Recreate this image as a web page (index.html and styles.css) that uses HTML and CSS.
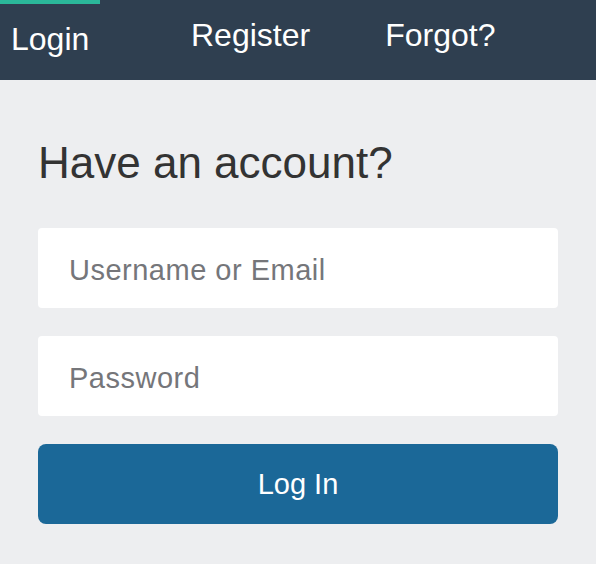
FILE: index.html
```html
<!DOCTYPE html>
<html lang="en">
<head>
<meta charset="utf-8">
<title>Login</title>
<link rel="stylesheet" href="styles.css">
</head>
<body>
<header class="topbar">
  <nav class="tabs">
    <a class="tab tab-login active">Login</a>
    <a class="tab tab-register">Register</a>
    <a class="tab tab-forgot">Forgot?</a>
  </nav>
</header>
<main class="panel">
  <h1 class="title">Have an account?</h1>
  <form class="form">
    <input class="field" type="text" placeholder="Username or Email">
    <input class="field" type="password" placeholder="Password">
    <button class="submit" type="button">Log In</button>
  </form>
</main>
</body>
</html>
```

FILE: styles.css
```css
* { box-sizing: border-box; }
html, body {
  margin: 0;
  padding: 0;
  background: #edeef0;
  font-family: "Liberation Sans", Arial, sans-serif;
}
.topbar {
  height: 80px;
  background: #2f3f50;
}
.tabs {
  display: flex;
  align-items: flex-start;
  height: 80px;
}
.tab {
  color: #ffffff;
  font-size: 32px;
  line-height: 37px;
  text-decoration: none;
  padding-top: 17px;
}
.tab-login {
  width: 100px;
  padding-left: 11px;
  border-top: 4px solid #2bb89a;
}
.tab-register {
  margin-left: 91px;
}
.tab-forgot {
  margin-left: 75px;
}
.panel {
  padding: 57px 38px 40px;
}
.title {
  margin: 0 0 39px;
  font-size: 44px;
  line-height: 52px;
  font-weight: normal;
  color: #333333;
}
.form {
  display: flex;
  flex-direction: column;
  gap: 28px;
}
.field {
  display: block;
  width: 100%;
  height: 80px;
  border: none;
  border-radius: 4px;
  background: #ffffff;
  padding: 4px 31px 0;
  font-family: "Liberation Sans", Arial, sans-serif;
  font-size: 29px;
  letter-spacing: 0.5px;
  color: #333333;
  outline: none;
}
.field::placeholder {
  color: #75767a;
  opacity: 1;
}
.submit {
  display: block;
  width: 100%;
  height: 80px;
  border: none;
  border-radius: 8px;
  background: #1b6898;
  color: #ffffff;
  font-family: "Liberation Sans", Arial, sans-serif;
  font-size: 29px;
  cursor: pointer;
}
```
